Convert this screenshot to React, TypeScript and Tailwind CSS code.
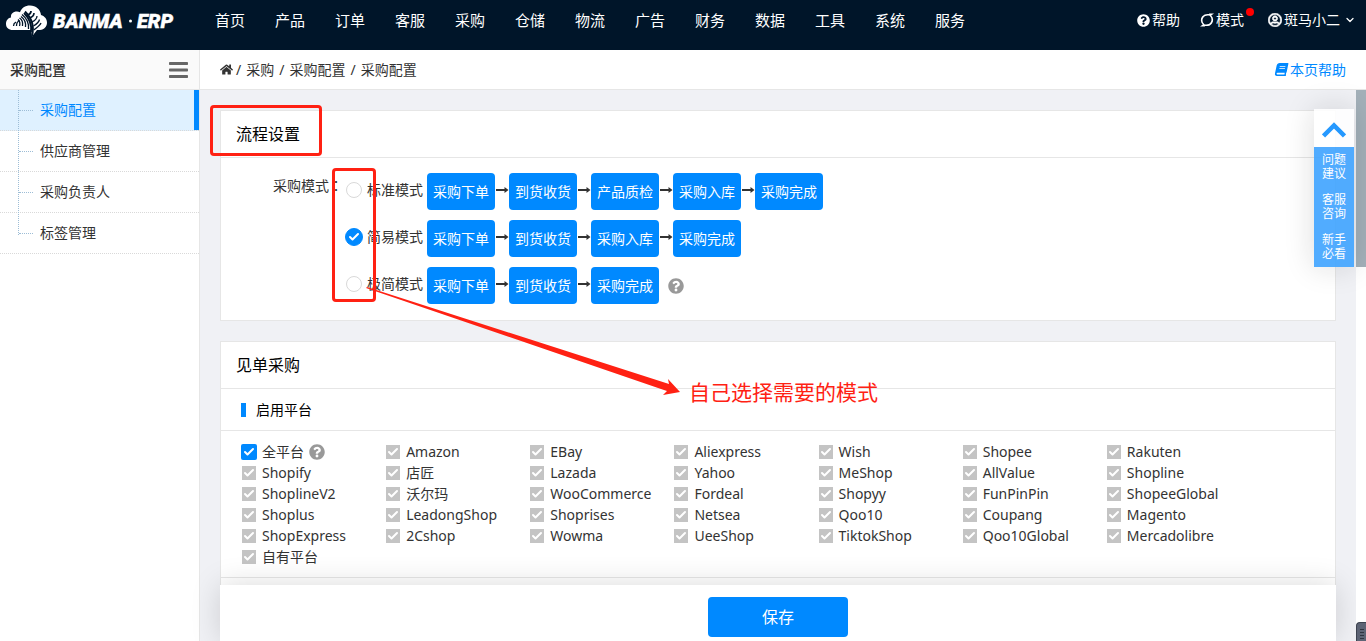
import { FaBook, FaHome, FaQuestionCircle, FaRegUserCircle } from "react-icons/fa";
import { Check, ChevronDown } from "lucide-react";

const NAV = ["首页", "产品", "订单", "客服", "采购", "仓储", "物流", "广告", "财务", "数据", "工具", "系统", "服务"];
const MENU = ["采购配置", "供应商管理", "采购负责人", "标签管理"];

const MODES = [
  { id: "standard", label: "标准模式", steps: ["采购下单", "到货收货", "产品质检", "采购入库", "采购完成"], help: false },
  { id: "simple", label: "简易模式", steps: ["采购下单", "到货收货", "采购入库", "采购完成"], help: false },
  { id: "minimal", label: "极简模式", steps: ["采购下单", "到货收货", "采购完成"], help: true },
];

const PLATFORMS = [
  "全平台", "Amazon", "EBay", "Aliexpress", "Wish", "Shopee", "Rakuten",
  "Shopify", "店匠", "Lazada", "Yahoo", "MeShop", "AllValue", "Shopline",
  "ShoplineV2", "沃尔玛", "WooCommerce", "Fordeal", "Shopyy", "FunPinPin", "ShopeeGlobal",
  "Shoplus", "LeadongShop", "Shoprises", "Netsea", "Qoo10", "Coupang", "Magento",
  "ShopExpress", "2Cshop", "Wowma", "UeeShop", "TiktokShop", "Qoo10Global", "Mercadolibre",
  "自有平台",
];

function Logo() {
  return (
    <a href="#" aria-label="BANMA ERP" className="flex w-[200px] shrink-0 items-center">
      <svg viewBox="0 0 180 40" className="h-10 w-[180px]" fill="none">
        <path
          d="M13 30C8.500 30 6 27.500 6 24C6 20.500 8 18 11 17.500C10.500 14 13 11.500 17 11.500C18 11.500 19 11.800 20 12.200C21.500 8 25 5.500 30 5.500C36 5.500 40.500 9.500 41 15C44.500 16 47 19 47 22.500C47 26.500 44.500 29.500 40 30H37L32 36.500L31 30Z"
          fill="#fff"
        />
        <g stroke="#001529" strokeWidth="1.300">
          <path d="M13.500 26C13.500 24 14 23 16 22" />
          <path d="M16.500 26C16.500 23 17 21.500 19.500 20.500" />
          <path d="M19.500 26C20.500 23 20 21.500 18 19.500" />
          <path d="M22.500 26C23 23 22 19.500 19.500 18" />
          <path d="M25.500 27C26 23 24.500 19 21 16.500" />
          <path d="M28.500 29C29 24 27 18.500 22 14.500" />
          <path d="M31 32C32 25 29.500 18.500 24 13" strokeWidth="1.800" />
          <path d="M32 36C34.500 27 32.500 19 25 11.500" strokeWidth="1.800" />
          <path d="M27 15C29.500 14.500 31 13 31 11" strokeWidth="1.800" />
          <path d="M29.500 18C32.500 17 34 15.500 34 13" strokeWidth="1.600" />
          <path d="M32 22C35 20.500 37 18.500 37 16" />
          <path d="M33.500 26C37 24 39 22 39.500 19.500" />
          <path d="M34 30C37 27.500 40 25.500 41 23" />
        </g>
        <text x="53" y="28" fill="#fff" stroke="#fff" strokeWidth="0.400" fontFamily="Roboto, sans-serif" fontSize="20" fontWeight="900" fontStyle="italic">
          BANMA
        </text>
        <circle cx="130.500" cy="21" r="1.500" fill="#fff" />
        <text x="137" y="28" fill="#fff" stroke="#fff" strokeWidth="0.400" fontFamily="Roboto, sans-serif" fontSize="20" fontWeight="900" fontStyle="italic">
          ERP
        </text>
      </svg>
    </a>
  );
}

function ModeIcon() {
  return (
    <svg viewBox="0 0 14 16" className="h-4 w-3.5" fill="currentColor">
      <path d="M0 14.500L2.800 12.600C0.500 10.500 0.200 7 2 4.600C3.700 2.300 6 1.800 8.200 1.900L12 2L9.500 3.700C6.800 3.200 4.600 3.800 3.300 5.700C1.900 7.800 2.400 10.200 4 11.800L5 14.600Z" />
      <path d="M14 1.500L11.200 3.400C13.500 5.500 13.800 9 12 11.400C10.300 13.700 8 14.200 5.800 14.100L2 14L4.500 12.300C7.200 12.800 9.400 12.200 10.700 10.300C12.100 8.200 11.600 5.800 10 4.200L9 1.400Z" />
    </svg>
  );
}

function TopBar() {
  return (
    <header className="flex h-[50px] shrink-0 bg-[#001529] pb-2.5 text-white">
      <Logo />
      <nav className="flex flex-1 items-center">
        {NAV.map((item) => (
          <a key={item} href="#" className="w-[60px] text-center text-[15px] leading-5">
            {item}
          </a>
        ))}
      </nav>
      <div className="flex items-center gap-5 pr-2.5 text-sm leading-5">
        <a href="#" className="flex items-center gap-0.5">
          <FaQuestionCircle className="size-[13px]" />
          帮助
        </a>
        <a href="#" className="relative flex items-center gap-0.5">
          <ModeIcon />
          模式
          <span className="absolute -top-0.5 -right-2.5 size-2 rounded-full bg-[#ff0000]" />
        </a>
        <button type="button" className="ml-1 flex items-center gap-0.5">
          <FaRegUserCircle className="size-3.5" stroke="currentColor" strokeWidth={24} />
          斑马小二
          <ChevronDown className="ml-0.5 size-3" strokeWidth={2.5} />
        </button>
      </div>
    </header>
  );
}

function Sidebar() {
  return (
    <aside className="w-[200px] shrink-0 border-r border-[#e6e6e6] bg-white">
      <div className="flex h-10 items-center justify-between border-b border-[#e6e6e6] bg-[#fafafa] pr-[11px] pl-2.5">
        <h2 className="text-sm font-medium text-[#333]">采购配置</h2>
        <button type="button" aria-label="收起菜单" className="text-[#666]">
          <svg viewBox="0 0 19 16" className="h-4 w-[19px]" fill="currentColor">
            <rect width="19" height="3" rx="0.800" />
            <rect y="6.500" width="19" height="3" rx="0.800" />
            <rect y="13" width="19" height="3" rx="0.800" />
          </svg>
        </button>
      </div>
      <ul className="relative">
        {MENU.map((item, i) => (
          <li
            key={item}
            className={
              i === 0
                ? "border-b border-dotted border-[#d9d9d9] bg-[#dff1ff] text-[#0089ff]"
                : "border-b border-dotted border-[#d9d9d9] text-[#333]"
            }
          >
            <a
              href="#"
              className={
                i === 0
                  ? "flex h-10 items-center border-r-[5px] border-[#0089ff] pl-[19px] text-sm"
                  : "flex h-10 items-center pl-[19px] text-sm"
              }
            >
              <span className="mr-[7px] w-3.5 border-t border-dotted border-[#9dbdd6]" />
              {item}
            </a>
          </li>
        ))}
        <li aria-hidden className="absolute top-0 bottom-[19px] left-[18px] border-l border-dotted border-[#9dbdd6]" />
      </ul>
    </aside>
  );
}

function StepArrow() {
  return (
    <svg viewBox="0 0 14 10" className="mb-[3px] h-2.5 w-3.5 shrink-0 text-[#333]">
      <path d="M1 4H9.500V2L13.500 5L9.500 8V6H1Z" fill="currentColor" />
    </svg>
  );
}

function ProcessPanel() {
  return (
    <section className="relative border border-[#e6e6e6] bg-white">
      <h3 className="border-b border-[#e6e6e6] px-[15px] py-[11px] text-base text-black">流程设置</h3>
      <div className="flex px-2.5 pt-[15px] pb-4">
        <span className="mr-0.5 w-28 text-right text-sm leading-6">
          采购模式<span className="font-['Noto_Sans_CJK_TC',sans-serif]" lang="zh-TW">：</span>
        </span>
        <div role="radiogroup" aria-label="采购模式" className="flex flex-col gap-2.5">
          {MODES.map((mode) => (
            <div key={mode.id} className="flex items-center">
              <label className="flex items-center pb-1 text-sm">
                <span className="relative mr-1 flex size-[18px] items-center justify-center">
                  <input
                    type="radio"
                    name="mode"
                    defaultChecked={mode.id === "simple"}
                    className="peer size-4 appearance-none rounded-full border border-[#d9d9d9] bg-white checked:size-[18px] checked:border-[#0089ff] checked:bg-[#0089ff]"
                  />
                  <Check className="pointer-events-none absolute hidden size-3 text-white peer-checked:block" strokeWidth={4} />
                </span>
                {mode.label}
              </label>
              <ol className="ml-1 flex text-sm text-white">
                {mode.steps.map((step, i) => (
                  <li key={step} className="flex items-center">
                    {i > 0 && <StepArrow />}
                    <span className="rounded bg-[#0089ff] px-1.5 pt-[9px] pb-2 leading-5">{step}</span>
                  </li>
                ))}
              </ol>
              {mode.help && <FaQuestionCircle className="ml-[9px] size-4 text-[#999]" />}
            </div>
          ))}
        </div>
      </div>
      <Annotations />
    </section>
  );
}

function Annotations() {
  return (
    <div className="pointer-events-none absolute inset-0 z-10 text-[#ff2113]">
      <div className="absolute -top-1.5 -left-[11px] h-[51px] w-28 rounded border-3 border-current" />
      <div className="absolute top-[57px] left-[111px] h-[134px] w-11 rounded border-3 border-current" />
      <svg viewBox="0 0 320 112" className="absolute top-[175px] left-[144px] h-28 w-80">
        <path d="M1 2L2 1L304 98L303 93L315 106L298 109L302 105L296 103Z" fill="currentColor" />
      </svg>
      <p className="absolute top-[265px] left-[468px] text-[21px] leading-8">自己选择需要的模式</p>
    </div>
  );
}

function PlatformOption({ name, first }: { name: string; first: boolean }) {
  return (
    <div className="flex h-[21px] items-center">
      <label className="flex items-center text-sm leading-5">
        <span className="relative mr-[5px] flex size-4 items-center justify-center">
          <input
            type="checkbox"
            defaultChecked
            disabled={!first}
            className="size-4 appearance-none rounded-xs bg-[#0089ff] disabled:size-3.5 disabled:rounded-none disabled:bg-[#c4c4c4]"
          />
          <Check className="pointer-events-none absolute size-3 text-white" strokeWidth={4} />
        </span>
        {name}
      </label>
      {first && <FaQuestionCircle className="ml-[5px] size-4 text-[#999]" />}
    </div>
  );
}

function PlatformPanel() {
  return (
    <section className="border border-[#e6e6e6] bg-white">
      <h3 className="border-b border-[#e6e6e6] px-[15px] py-[11px] text-base text-black">见单采购</h3>
      <h4 className="flex h-[42px] items-center border-b border-[#e6e6e6] px-5 text-sm text-black">
        <span className="mr-2.5 h-3.5 w-[5px] bg-[#0089ff]" />
        启用平台
      </h4>
      <div className="grid grid-cols-7 border-b border-[#e6e6e6] py-2.5 pr-[85px] pl-5">
        {PLATFORMS.map((name, i) => (
          <PlatformOption key={name} name={name} first={i === 0} />
        ))}
      </div>
      <div className="h-16" />
    </section>
  );
}

function SideTools() {
  return (
    <div className="absolute top-[19px] right-3 z-20 w-10 bg-white text-[#0f8fff] opacity-90 shadow-[0_0_30px_rgba(0,0,0,0.15)]">
      <button type="button" aria-label="返回顶部" className="flex h-[38px] w-full items-center justify-center pt-1">
        <svg viewBox="0 0 24 16" className="h-4 w-6" fill="none" stroke="currentColor" strokeWidth="4.500">
          <path d="M1.500 14L12 3.500L22.500 14" />
        </svg>
      </button>
      <div className="bg-[#3fa4ff] text-center text-xs leading-[14px] text-white">
        {["问题建议", "客服咨询", "新手必看"].map((item) => (
          <a key={item} href="#" className="block px-[7px] py-1.5">
            {item}
          </a>
        ))}
      </div>
    </div>
  );
}

export default function App() {
  return (
    <div className="flex h-screen flex-col overflow-hidden bg-[#f0f1f5] font-['Noto_Sans','Noto_Sans_CJK_SC',sans-serif] text-[#333]">
      <TopBar />
      <div className="flex min-h-0 flex-1">
        <Sidebar />
        <div className="flex min-w-0 flex-1 flex-col">
          <div className="flex h-10 shrink-0 items-center justify-between border-b border-[#e6e6e6] bg-white px-5 text-sm">
            <nav className="flex items-center gap-[5px]" aria-label="面包屑">
              <a href="#" aria-label="首页" className="-mr-0.5"><FaHome className="size-[13px]" /></a>
              <span>/</span>
              <a href="#">采购</a>
              <span>/</span>
              <a href="#">采购配置</a>
              <span>/</span>
              <span>采购配置</span>
            </nav>
            <a href="#" className="flex items-center gap-0.5 text-[#0089ff]">
              <FaBook className="size-[13px] -skew-x-12" />
              本页帮助
            </a>
          </div>
          <div className="relative flex min-h-0 flex-1">
            <main className="flex min-w-0 flex-1 flex-col px-5">
              <div className="-mx-5 flex min-h-0 flex-1 flex-col overflow-hidden px-5 pt-5">
                <div className="flex shrink-0 flex-col gap-5">
                  <ProcessPanel />
                  <PlatformPanel />
                </div>
              </div>
              <footer className="relative z-10 flex h-14 shrink-0 items-center justify-center bg-white pt-2 shadow-[0_0_30px_rgba(0,0,0,0.15)]">
                <button type="button" className="h-10 w-[140px] rounded bg-[#0089ff] text-base text-white">
                  保存
                </button>
              </footer>
            </main>
            <div className="relative z-10 flex w-2.5 shrink-0 flex-col justify-between bg-white">
              <div className="h-[177px] bg-[#a3b0b9]" />
              <div className="flex h-[19px] flex-col gap-0.5 rounded-tl border-t border-l border-[#3d4350] bg-[#5d6475] pt-1.5 pl-[3px]">
                <span className="h-px w-1 bg-[#2f3440]" />
                <span className="h-px w-1 bg-[#2f3440]" />
                <span className="h-px w-1 bg-[#2f3440]" />
                <span className="h-px w-1 bg-[#2f3440]" />
              </div>
            </div>
            <SideTools />
          </div>
        </div>
      </div>
    </div>
  );
}
